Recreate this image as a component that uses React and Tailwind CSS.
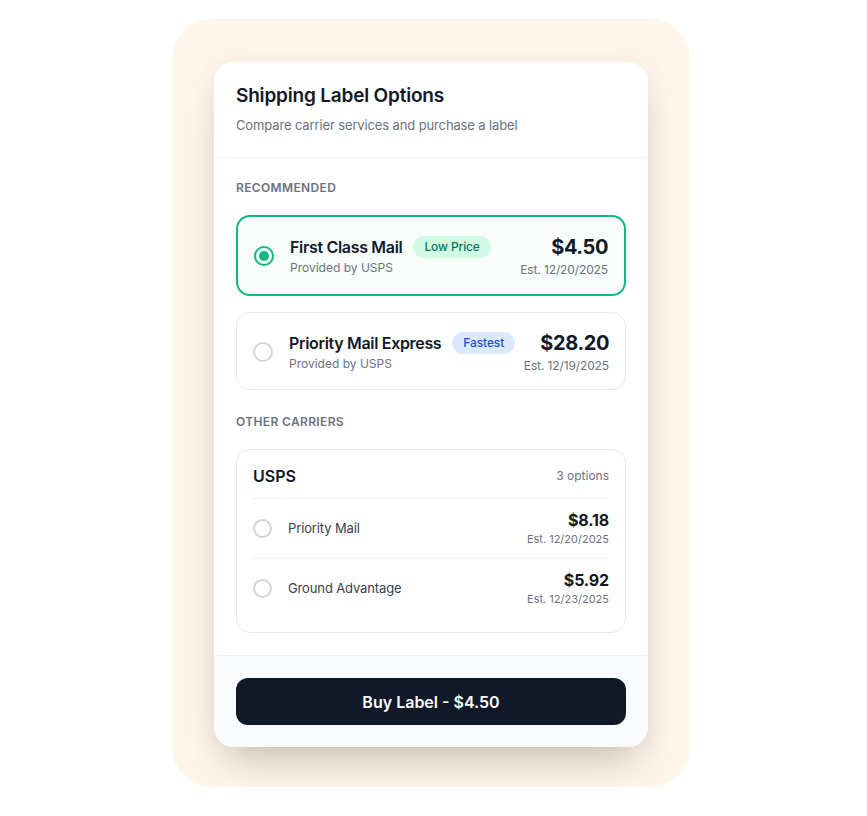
import { useState } from 'react';

const recommended = [
  { id: 'first', name: 'First Class Mail', badge: 'Low Price', tone: 'green', price: '$4.50', est: 'Est. 12/20/2025' },
  { id: 'express', name: 'Priority Mail Express', badge: 'Fastest', tone: 'blue', price: '$28.20', est: 'Est. 12/19/2025' },
];

const others = [
  { id: 'priority', name: 'Priority Mail', price: '$8.18', est: 'Est. 12/20/2025' },
  { id: 'ground', name: 'Ground Advantage', price: '$5.92', est: 'Est. 12/23/2025' },
];

const Radio = ({ on, small }) => (
  <span
    className={`flex shrink-0 items-center justify-center rounded-full border-2 ${
      small ? 'w-[19px] h-[19px]' : 'w-5 h-5'
    } ${on ? 'border-[#10b981]' : 'border-[#d1d5db]'}`}
  >
    {on && <span className="w-[10px] h-[10px] rounded-full bg-[#10b981]" />}
  </span>
);

export default function App() {
  const [selected, setSelected] = useState('first');
  const price = [...recommended, ...others].find(o => o.id === selected)?.price;

  return (
    <div className="min-h-[816px] bg-white pt-[19px] font-['Inter',sans-serif] text-[#111827]">
      <div className="ml-[172px] w-[518px] h-[768px] rounded-[40px] bg-[#fef6eb] px-[42px] pt-[43px]">
        <div className="bg-white rounded-[20px] overflow-hidden shadow-[0_22px_40px_-12px_rgba(60,40,20,0.28),0_0_24px_rgba(120,90,40,0.06)]">
          {/* Header */}
          <div className="px-[22px] pt-[22px] pb-[22px] border-b border-[#eef0f3]">
            <h1 className="text-[19px] leading-6 font-semibold tracking-[-0.01em]">Shipping Label Options</h1>
            <p className="mt-[7px] text-[13px] leading-5 text-[#6b7280] tracking-[-0.01em]">Compare carrier services and purchase a label</p>
          </div>

          {/* Body */}
          <div className="px-[22px] pt-[22px] pb-[22px]">
            <p className="text-[12px] leading-4 font-semibold uppercase tracking-[0.03em] text-[#6b7280] mb-[19px]">Recommended</p>
            <div className="flex flex-col gap-4">
              {recommended.map(o => {
                const on = selected === o.id;
                return (
                  <button
                    key={o.id}
                    onClick={() => setSelected(o.id)}
                    className={`w-full text-left flex items-center rounded-[14px] px-4 ${
                      on ? 'border-2 border-[#10b981] bg-[#f8fdfb] py-4' : 'border border-[#e5e7eb] bg-white pt-4 pb-[15px]'
                    }`}
                  >
                    <Radio on={on} />
                    <div className="ml-4 flex-1 min-w-0">
                      <div className="flex items-center gap-[11px] whitespace-nowrap">
                        <span className="text-[16px] leading-[22px] font-semibold tracking-[-0.02em]">{o.name}</span>
                        <span
                          className={`rounded-full px-[11px] h-[22px] flex items-center text-[12px] font-medium tracking-[-0.01em] ${
                            o.tone === 'green' ? 'bg-[#d1fae5] text-[#047857]' : 'bg-[#dbeafe] text-[#1d4ed8]'
                          }`}
                        >
                          {o.badge}
                        </span>
                      </div>
                      <p className="mt-[2px] text-[12px] leading-4 text-[#6b7280]">Provided by USPS</p>
                    </div>
                    <div className="shrink-0 text-right whitespace-nowrap">
                      <p className="text-[20px] leading-7 font-bold tracking-[-0.02em]">{o.price}</p>
                      <p className="mt-px text-[12px] leading-4 text-[#6b7280] tracking-[-0.01em]">{o.est}</p>
                    </div>
                  </button>
                );
              })}
            </div>

            <p className="mt-6 text-[12px] leading-4 font-semibold uppercase tracking-[0.03em] text-[#6b7280] mb-[19px]">Other Carriers</p>
            <div className="rounded-[14px] border border-[#e5e7eb] px-4 pt-4 pb-[14px]">
              <div className="flex items-center justify-between pb-3 border-b border-[#eef0f3]">
                <span className="text-[16px] leading-5 font-semibold">USPS</span>
                <span className="text-[12px] text-[#6b7280]">3 options</span>
              </div>
              {others.map((o, i) => (
                <button
                  key={o.id}
                  onClick={() => setSelected(o.id)}
                  className={`w-full text-left flex items-center gap-4 py-[11px] ${i > 0 ? 'border-t border-[#eef0f3]' : ''}`}
                >
                  <Radio on={selected === o.id} small />
                  <span className="flex-1 text-[13px] text-[#374151] tracking-[-0.01em]">{o.name}</span>
                  <div className="text-right">
                    <p className="text-[16px] leading-5 font-bold tracking-[-0.01em]">{o.price}</p>
                    <p className="mt-px text-[11px] leading-4 text-[#6b7280]">{o.est}</p>
                  </div>
                </button>
              ))}
            </div>
          </div>

          {/* Footer */}
          <div className="bg-[#f8fafc] border-t border-[#eef0f3] p-[22px]">
            <button className="w-full h-[47px] rounded-[12px] bg-[#111827] text-white text-[16px] font-semibold">
              Buy Label - {price}
            </button>
          </div>
        </div>
      </div>
    </div>
  );
}
